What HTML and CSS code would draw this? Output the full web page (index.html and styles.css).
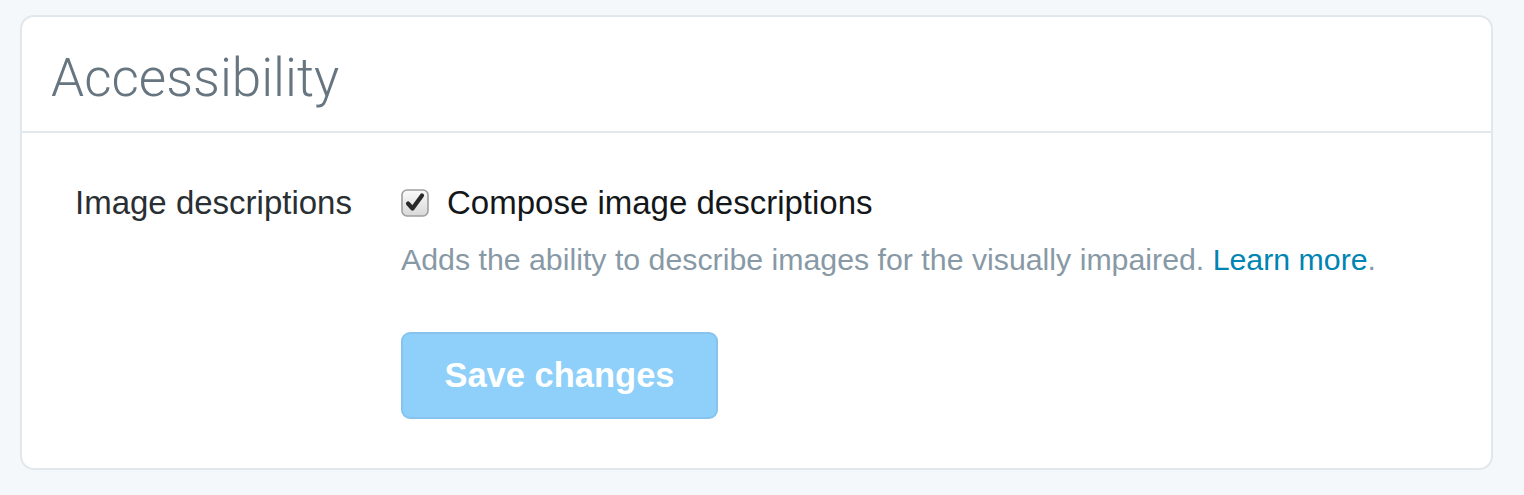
FILE: index.html
```html
<!DOCTYPE html>
<html lang="en">
<head>
<meta charset="utf-8">
<title>Accessibility</title>
<link rel="stylesheet" href="styles.css">
</head>
<body>
<div class="page">
  <section class="card">
    <header class="card-header">
      <h1 class="title">Accessibility</h1>
    </header>
    <div class="card-body">
      <div class="setting">
        <div class="setting-label">Image descriptions</div>
        <div class="setting-control">
          <label class="check-line">
            <span class="checkbox">
              <svg width="28" height="28" viewBox="0 0 28 28">
                <defs>
                  <linearGradient id="cbg" x1="0" y1="0" x2="0" y2="1">
                    <stop offset="0" stop-color="#fbfbfb"/>
                    <stop offset="1" stop-color="#d8d8d8"/>
                  </linearGradient>
                </defs>
                <rect x="1" y="1" width="26" height="26" rx="5" ry="5" fill="url(#cbg)" stroke="#9e9e9e" stroke-width="1.6"/>
                <path d="M7 14.5 L11.5 19.5 L21 6.5" fill="none" stroke="#2a2a2a" stroke-width="4.2" stroke-linecap="round" stroke-linejoin="round"/>
              </svg>
            </span>
            <span class="check-text">Compose image descriptions</span>
          </label>
          <p class="desc">Adds the ability to describe images for the visually impaired. <a class="link" href="#">Learn more</a>.</p>
          <div class="actions">
            <button class="btn-primary" type="button" disabled>Save changes</button>
          </div>
        </div>
      </div>
    </div>
  </section>
</div>
</body>
</html>
```

FILE: styles.css
```css
html, body {
  margin: 0;
  padding: 0;
  background: #f5f8fa;
}

body {
  font-family: "Liberation Sans", Arial, sans-serif;
  color: #292f33;
}

.page {
  padding: 15px 31px 0 20px;
}

.card {
  background: #ffffff;
  border: 2px solid #e1e8ed;
  border-radius: 14px;
}

.card-header {
  padding: 31px 29px 23px;
  border-bottom: 2px solid #e1e8ed;
}

.title {
  margin: 0;
  font-family: Roboto, "Liberation Sans", sans-serif;
  font-weight: 300;
  font-size: 53px;
  line-height: 60px;
  color: #66757f;
}

.card-body {
  padding: 50px 53px 49px;
}

.setting {
  display: grid;
  grid-template-columns: 326px 1fr;
}

.setting-label {
  font-size: 33px;
  line-height: 40px;
  color: #292f33;
}

.check-line {
  display: flex;
  align-items: center;
  height: 40px;
  gap: 18px;
}

.checkbox {
  display: flex;
  width: 28px;
  height: 28px;
}

.check-text {
  font-size: 33px;
  line-height: 40px;
  color: #14171a;
}

.desc {
  margin: 19px 0 0;
  font-size: 30.3px;
  line-height: 36px;
  color: #8899a6;
}

.link {
  color: #0084b4;
  text-decoration: none;
}

.actions {
  margin-top: 54px;
}

.btn-primary {
  width: 317px;
  height: 87px;
  padding: 0;
  border: 2px solid #86c4ef;
  border-radius: 9px;
  background: #8ed0f9;
  color: #ffffff;
  font-family: "Liberation Sans", Arial, sans-serif;
  font-weight: bold;
  font-size: 34.5px;
}
```
